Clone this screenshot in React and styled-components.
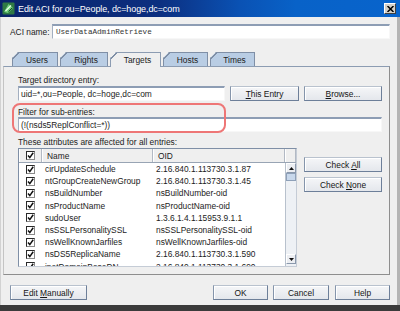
import React from 'react';
import styled, { createGlobalStyle, css } from 'styled-components';

const Global = createGlobalStyle`
  html, body { margin: 0; padding: 0; background: #ffffff; overflow: hidden; }
  #root { width: 400px; height: 311px; }
`;

const FONT = `"Liberation Sans", Arial, sans-serif`;

const Window = styled.div`
  width: 400px;
  height: 311px;
  box-sizing: border-box;
  display: flex;
  flex-direction: column;
  background: #efefef;
  border-bottom: 6px solid #3b3b3b;
  font-family: ${FONT};
  font-size: 8.4px;
  color: #1c1c1c;
`;

const TitleBar = styled.div`
  height: 17px;
  flex: none;
  display: flex;
  align-items: center;
  gap: 3px;
  padding: 0 4px 0 2px;
  background: linear-gradient(90deg, #0a246a 0%, #0c2f80 40%, #0a52b4 60%, #0862c8 74%, #0864cc 100%);
  color: #ffffff;
  font-size: 9px;
`;

const TitleText = styled.div`
  flex: 1;
  white-space: nowrap;
  letter-spacing: -0.1px;
`;

const CloseBtn = styled.div`
  width: 12px;
  height: 11px;
  box-sizing: border-box;
  background: #d4d0c8;
  border: 1px solid;
  border-color: #ffffff #404040 #404040 #ffffff;
  display: flex;
  align-items: center;
  justify-content: center;
`;

const Body = styled.div`
  flex: 1;
  display: flex;
  flex-direction: column;
  border-left: 1px solid #d2d2d2;
  border-right: 3px solid #b4b4b4;
  padding: 0 7px 0 2px;
`;

const NameRow = styled.div`
  display: flex;
  align-items: center;
  height: 15px;
  margin: 7px 0 0 7px;
`;

const Label = styled.div`
  width: ${p => (p.$w ? `${p.$w}px` : 'auto')};
  flex: none;
  line-height: 10px;
  white-space: nowrap;
`;

const Field = styled.div`
  height: 15px;
  box-sizing: border-box;
  background: #ffffff;
  border-top: 2px solid #8d9db4;
  border-left: 1px solid #a3afc0;
  border-right: 1px solid #f7f7f7;
  border-bottom: 1px solid #f7f7f7;
  display: flex;
  align-items: center;
  padding-left: ${p => (p.$mono ? 3 : 2)}px;
  white-space: nowrap;
  overflow: hidden;
  flex: ${p => (p.$w ? 'none' : 1)};
  width: ${p => (p.$w ? `${p.$w}px` : 'auto')};
  ${p => p.$mono && css`
    font-family: "Liberation Mono", "Courier New", monospace;
    font-size: 7.6px;
    color: #333;
  `}
`;

const TabStrip = styled.div`
  display: flex;
  align-items: flex-end;
  gap: 2px;
  height: 14px;
  margin: 13px 0 0 9px;
  position: relative;
  z-index: 2;
`;

const Tab = styled.div`
  width: ${p => p.$w}px;
  height: 14px;
  box-sizing: border-box;
  display: flex;
  align-items: center;
  justify-content: center;
  padding-left: 4px;
  border: 1px solid #7f8fa6;
  border-bottom: none;
  background: #b9cde4;
  clip-path: polygon(6px 0, 100% 0, 100% 100%, 0 100%, 0 6px);
  position: relative;
  &::before {
    content: '';
    position: absolute;
    left: 0;
    top: 0;
    width: 8px;
    height: 8px;
    background: linear-gradient(135deg, transparent 3.5px, #7f8fa6 3.5px, #7f8fa6 4.7px, transparent 4.7px);
  }
  ${p => p.$active && css`
    background: #efefef;
    height: 15px;
    margin-bottom: -1px;
    border-color: #8c9cb2;
  `}
`;

const Panel = styled.div`
  height: 209px;
  box-sizing: border-box;
  border: 1px solid;
  border-color: #8c9cb2 #8e8e8e #8e8e8e #c4c4c4;
  padding: 8px 7px 7px 14px;
  display: flex;
  flex-direction: column;
  position: relative;
`;

const Row = styled.div`
  display: flex;
  gap: 5px;
  margin-top: ${p => p.$mt || 0}px;
`;

const SectionLabel = styled.div`
  line-height: 10px;
  height: 10px;
  white-space: nowrap;
  margin-top: ${p => p.$mt || 0}px;
`;

const Btn = styled.div`
  height: 15px;
  width: ${p => p.$w}px;
  margin-left: ${p => p.$ml || 0}px;
  flex: none;
  box-sizing: border-box;
  display: flex;
  align-items: center;
  justify-content: center;
  color: #151515;
  background: linear-gradient(#f5f6f8, #e4e7ec);
  border: 1px solid;
  border-color: #b9c2ce #6d7f99 #6d7f99 #8595ab;
  box-shadow: inset 1px 1px 0 #ffffff;
  white-space: nowrap;
  u { text-decoration: underline; text-underline-offset: 1px; }
`;

const Annotation = styled.div`
  position: absolute;
  left: 8px;
  top: 36px;
  width: 214px;
  height: 30px;
  box-sizing: border-box;
  border: 2px solid #ee7676;
  border-radius: 8px;
  pointer-events: none;
`;

const TableArea = styled.div`
  display: flex;
  gap: 7px;
  margin-top: 1px;
`;

const Table = styled.div`
  width: 279px;
  height: 119px;
  box-sizing: border-box;
  border: 1px solid;
  border-color: #7f8fa6 #c5ccd6 #c5ccd6 #7f8fa6;
  background: #ffffff;
  display: flex;
  flex-direction: column;
  overflow: hidden;
`;

const HeaderRow = styled.div`
  display: grid;
  grid-template-columns: 23px 111px 132px 11px;
  height: 14px;
  flex: none;
  box-sizing: border-box;
  background: #efefef;
  border-bottom: 1px solid #98a4b4;
`;

const HeadCell = styled.div`
  display: flex;
  align-items: center;
  justify-content: ${p => (p.$center ? 'center' : 'flex-start')};
  padding-left: ${p => (p.$center ? 0 : 4)}px;
  border-left: 1px solid #ffffff;
  border-right: 1px solid #b2b9c4;
  color: #222;
`;

const TableBody = styled.div`
  flex: 1;
  display: flex;
  min-height: 0;
`;

const Rows = styled.div`
  flex: 1;
  overflow: hidden;
`;

const DataRow = styled.div`
  display: grid;
  grid-template-columns: 23px 111px 132px;
  height: 12.2px;
  align-items: center;
  white-space: nowrap;
`;

const Cell = styled.div`
  display: flex;
  align-items: center;
  justify-content: ${p => (p.$center ? 'center' : 'flex-start')};
  padding-left: ${p => (p.$center ? 0 : p.$pl || 2)}px;
  overflow: hidden;
`;

const CheckBox = styled.span`
  width: 9px;
  height: 9px;
  box-sizing: border-box;
  border: 1px solid;
  border-color: #2a2a2a #8a8a8a #8a8a8a #2a2a2a;
  background: #ffffff;
  display: inline-flex;
  align-items: center;
  justify-content: center;
`;

const ScrollBar = styled.div`
  width: 11px;
  flex: none;
  display: flex;
  flex-direction: column;
  background: #eef1f5;
  border-left: 1px solid #b8c1cd;
  box-sizing: border-box;
`;

const ScrollArrow = styled.div`
  height: 10px;
  flex: none;
  box-sizing: border-box;
  background: #eceef2;
  border: 1px solid;
  border-color: #ffffff #8a98ac #8a98ac #ffffff;
  display: flex;
  align-items: center;
  justify-content: center;
  margin-top: ${p => (p.$bottom ? 'auto' : 0)};
  margin-bottom: ${p => (p.$bottom ? '2px' : 0)};
`;

const Thumb = styled.div`
  height: 8px;
  flex: none;
  box-sizing: border-box;
  border: 1px solid #8ea0b8;
  background-color: #c8d8ec;
  background-image: radial-gradient(#8ea6c6 0.6px, transparent 0.7px);
  background-size: 2px 2px;
`;

const SideButtons = styled.div`
  display: flex;
  flex-direction: column;
  gap: 5px;
  padding-top: 9px;
`;

const Footer = styled.div`
  display: flex;
  gap: 5px;
  height: 15px;
  margin-top: 10px;
  padding-left: 7px;
`;

const Spacer = styled.div`
  flex: 1;
`;

const rows = [
  ['cirUpdateSchedule', '2.16.840.1.113730.3.1.87'],
  ['ntGroupCreateNewGroup', '2.16.840.1.113730.3.1.45'],
  ['nsBuildNumber', 'nsBuildNumber-oid'],
  ['nsProductName', 'nsProductName-oid'],
  ['sudoUser', '1.3.6.1.4.1.15953.9.1.1'],
  ['nsSSLPersonalitySSL', 'nsSSLPersonalitySSL-oid'],
  ['nsWellKnownJarfiles', 'nsWellKnownJarfiles-oid'],
  ['nsDS5ReplicaName', '2.16.840.1.113730.3.1.590'],
  ['inetDomainBaseDN', '2.16.840.1.113730.3.1.690'],
];

const tabs = [
  ['Users', 46],
  ['Rights', 48],
  ['Targets', 51, true],
  ['Hosts', 45],
  ['Times', 45],
];

const Tick = () => (
  <svg width="7" height="7" viewBox="0 0 7 7">
    <path d="M1 3.6 L2.8 5.6 L6.2 0.8" fill="none" stroke="#111" strokeWidth="1.5" />
  </svg>
);

const Checked = () => (
  <CheckBox>
    <Tick />
  </CheckBox>
);

const AppIcon = () => (
  <svg width="13" height="13" viewBox="0 0 13 13">
    <rect x="0.5" y="0.5" width="12" height="12" rx="1" fill="#2f7a44" />
    <path d="M2 10 L6.5 2 L11 6 L6 11 Z" fill="#6fcf7a" />
    <path d="M3.5 9 L9 3.5" stroke="#e8ffe8" strokeWidth="1.2" />
    <path d="M6.5 9.5 L10 6" stroke="#184a28" strokeWidth="1" />
  </svg>
);

export default function App() {
  return (
    <>
      <Global />
      <Window>
        <TitleBar>
          <AppIcon />
          <TitleText>Edit ACI for ou=People, dc=hoge,dc=com</TitleText>
          <CloseBtn>
            <svg width="7" height="6" viewBox="0 0 7 6">
              <path d="M0.5 0 L6.5 6 M6.5 0 L0.5 6" stroke="#000" strokeWidth="1.5" />
            </svg>
          </CloseBtn>
        </TitleBar>
        <Body>
          <NameRow>
            <Label $w={42}>ACI name:</Label>
            <Field $mono>UserDataAdminRetrieve</Field>
          </NameRow>
          <TabStrip>
            {tabs.map(([t, w, a]) => (
              <Tab key={t} $w={w} $active={a}>{t}</Tab>
            ))}
          </TabStrip>
          <Panel>
            <SectionLabel>Target directory entry:</SectionLabel>
            <Row $mt={1}>
              <Field $w={207}>uid=*,ou=People, dc=hoge,dc=com</Field>
              <Btn $w={69}><span><u>T</u>his Entry</span></Btn>
              <Btn $w={78}><span><u>B</u>rowse...</span></Btn>
            </Row>
            <SectionLabel $mt={6}>Filter for sub-entries:</SectionLabel>
            <Field>(!(nsds5ReplConflict=*))</Field>
            <SectionLabel $mt={5}>These attributes are affected for all entries:</SectionLabel>
            <TableArea>
              <Table>
                <HeaderRow>
                  <HeadCell $center><Checked /></HeadCell>
                  <HeadCell>Name</HeadCell>
                  <HeadCell>OID</HeadCell>
                  <HeadCell />
                </HeaderRow>
                <TableBody>
                  <Rows>
                    {rows.map(([n, o]) => (
                      <DataRow key={n}>
                        <Cell $center><Checked /></Cell>
                        <Cell $pl={3}>{n}</Cell>
                        <Cell $pl={3}>{o}</Cell>
                      </DataRow>
                    ))}
                  </Rows>
                  <ScrollBar>
                    <ScrollArrow>
                      <svg width="5" height="3" viewBox="0 0 5 3"><path d="M0 3 L2.5 0 L5 3 Z" fill="#111" /></svg>
                    </ScrollArrow>
                    <Thumb />
                    <ScrollArrow $bottom>
                      <svg width="5" height="3" viewBox="0 0 5 3"><path d="M0 0 L2.5 3 L5 0 Z" fill="#111" /></svg>
                    </ScrollArrow>
                  </ScrollBar>
                </TableBody>
              </Table>
              <SideButtons>
                <Btn $w={78}><span>Check <u>A</u>ll</span></Btn>
                <Btn $w={78}><span>Check <u>N</u>one</span></Btn>
              </SideButtons>
            </TableArea>
            <Annotation />
          </Panel>
          <Footer>
            <Btn $w={77}><span>Edit <u>M</u>anually</span></Btn>
            <Spacer />
            <Btn $w={55}>OK</Btn>
            <Btn $w={56}>Cancel</Btn>
            <Btn $w={55} $ml={1}>Help</Btn>
          </Footer>
        </Body>
      </Window>
    </>
  );
}
